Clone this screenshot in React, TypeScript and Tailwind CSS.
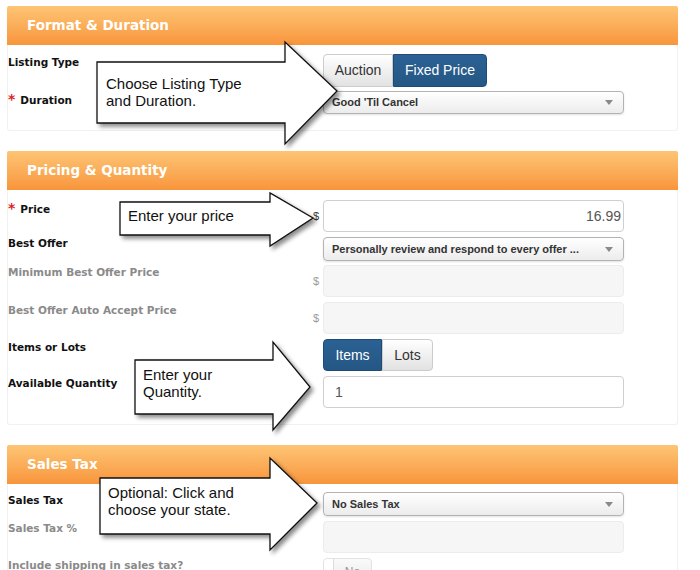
import type { ReactNode } from "react";

const LABEL = { fontFamily: '"DejaVu Sans", Verdana, sans-serif' };
const ARIAL = { fontFamily: '"Liberation Sans", Arial, sans-serif' };

function Section({ title, children, body }: { title: string; children: ReactNode; body: string }) {
  return (
    <div>
      <div
        className="flex h-[39px] items-center rounded-t-[2px] bg-gradient-to-b from-[#fdc574] to-[#f8953b] pl-[20px] text-[13.5px] font-bold text-white"
        style={LABEL}
      >
        {title}
      </div>
      <div className={`rounded-b-[3px] border border-t-0 border-[#f1f1f1] ${body}`}>{children}</div>
    </div>
  );
}

function Row({
  label,
  req,
  muted,
  pt = "pt-[1px]",
  addon,
  className = "",
  children,
}: {
  label: string;
  req?: boolean;
  muted?: boolean;
  pt?: string;
  addon?: boolean;
  className?: string;
  children: ReactNode;
}) {
  return (
    <div className={`flex ${className}`}>
      <div
        className={`w-[302px] text-[10.5px] font-bold leading-[13px] ${pt} ${muted ? "text-[#8a8a8a]" : "text-[#111]"}`}
        style={LABEL}
      >
        {req && <span className="mr-[5px] text-[14px] leading-[10px] text-[#d8261f]">*</span>}
        {label}
      </div>
      <div
        className={`flex w-[13px] items-center pl-[3px] text-[11px] ${muted ? "text-[#9a9a9a]" : "text-[#333]"}`}
        style={ARIAL}
      >
        {addon ? "$" : ""}
      </div>
      <div className="w-[301px]">{children}</div>
    </div>
  );
}

function Select({ value, h = "h-[24px]" }: { value: string; h?: string }) {
  return (
    <div
      className={`flex ${h} items-center justify-between rounded-[4px] border border-[#b3b3b3] bg-gradient-to-b from-white to-[#ececec] pl-[8px] pr-[10px] shadow-[0_1px_2px_rgba(0,0,0,0.12)]`}
    >
      <span className="text-[11px] font-bold text-[#333]" style={ARIAL}>
        {value}
      </span>
      <svg width="8" height="5" viewBox="0 0 8 5">
        <path d="M0 0h8L4 5z" fill="#8a8a8a" />
      </svg>
    </div>
  );
}

function Input({ value, right, disabled }: { value?: string; right?: boolean; disabled?: boolean }) {
  return (
    <div
      className={`flex h-[32px] items-center rounded-[4px] border px-[11px] text-[14px] text-[#555] ${
        disabled ? "border-[#ececec] bg-[#f6f6f6]" : "border-[#cfcfcf] bg-white"
      } ${right ? "justify-end pr-[2px]" : ""}`}
      style={ARIAL}
    >
      {value}
    </div>
  );
}

function Toggle({ items, active, h }: { items: [string, string][]; active: number; h: string }) {
  return (
    <div className="flex">
      {items.map(([t, w], i) => (
        <div
          key={t}
          className={`flex ${h} ${w} items-center justify-center border text-[14px] ${i === 0 ? "rounded-l-[4px]" : "rounded-r-[4px]"} ${
            i === active
              ? "border-[#1f4c77] bg-gradient-to-b from-[#2b6194] to-[#245784] text-white"
              : "border-[#cccccc] bg-gradient-to-b from-white to-[#e2e2e2] text-[#333]"
          }`}
          style={ARIAL}
        >
          {t}
        </div>
      ))}
    </div>
  );
}

type C = { l: number; t: number; r: number; b: number; ht: number; hb: number; tx: number; ty: number; x: number; y: number; lines: string[] };

const CALLOUTS: C[] = [
  { l: 97, t: 62, r: 285, b: 123, ht: 42, hb: 144, tx: 337, ty: 91, x: 106, y: 89, lines: ["Choose Listing Type", "and Duration."] },
  { l: 120, t: 202, r: 270, b: 235, ht: 193, hb: 246, tx: 313, ty: 218, x: 128, y: 221, lines: ["Enter your price"] },
  { l: 135, t: 360, r: 273, b: 414, ht: 342, hb: 430, tx: 310, ty: 387, x: 143, y: 380, lines: ["Enter your", "Quantity."] },
  { l: 100, t: 478, r: 270, b: 534, ht: 458, hb: 550, tx: 317, ty: 503, x: 108, y: 498, lines: ["Optional: Click and", "choose your state."] },
];

function Callouts() {
  return (
    <svg className="pointer-events-none absolute left-0 top-0" width="700" height="570" viewBox="0 0 700 570">
      <defs>
        <filter id="sh" x="-10%" y="-10%" width="130%" height="130%">
          <feDropShadow dx="3" dy="3" stdDeviation="2" floodColor="#000" floodOpacity="0.45" />
        </filter>
      </defs>
      {CALLOUTS.map((c, i) => (
        <g key={i}>
          <path
            d={`M${c.l} ${c.t}H${c.r}V${c.ht}L${c.tx} ${c.ty}L${c.r} ${c.hb}V${c.b}H${c.l}Z`}
            fill="#fff"
            stroke="#111"
            strokeWidth="1.3"
            filter="url(#sh)"
          />
          {c.lines.map((ln, j) => (
            <text key={j} x={c.x} y={c.y + j * 17} fontSize="15" fill="#111" style={ARIAL}>
              {ln}
            </text>
          ))}
        </g>
      ))}
    </svg>
  );
}

export default function App() {
  return (
    <div className="relative h-[570px] w-[700px] overflow-hidden bg-white">
      <div className="ml-[7px] flex w-[671px] flex-col gap-[20px] pt-[6px]">
        <Section title="Format & Duration" body="pt-[9px] pb-[16px]">
          <Row label="Listing Type" pt="pt-[2px]">
            <Toggle items={[["Auction", "w-[70px]"], ["Fixed Price", "w-[94px]"]]} active={1} h="h-[33px]" />
          </Row>
          <Row label="Duration" req pt="pt-[3px]" className="mt-[4px]">
            <Select value="Good 'Til Cancel" h="h-[23px]" />
          </Row>
        </Section>

        <Section title="Pricing & Quantity" body="pt-[10px] pb-[16px]">
          <Row label="Price" req addon pt="pt-[3px]">
            <Input value="16.99" right />
          </Row>
          <Row label="Best Offer" className="mt-[5px]" pt="pt-0">
            <Select value="Personally review and respond to every offer ..." />
          </Row>
          <Row label="Minimum Best Offer Price" muted addon className="mt-[4px]">
            <Input disabled />
          </Row>
          <Row label="Best Offer Auto Accept Price" muted addon className="mt-[5px]" pt="pt-[2px]">
            <Input disabled />
          </Row>
          <Row label="Items or Lots" className="mt-[5px]" pt="pt-[2px]">
            <Toggle items={[["Items", "w-[59px]"], ["Lots", "w-[51px]"]]} active={0} h="h-[32px]" />
          </Row>
          <Row label="Available Quantity" className="mt-[5px]">
            <Input value="1" />
          </Row>
        </Section>

        <Section title="Sales Tax" body="pt-[8px] pb-[16px]">
          <Row label="Sales Tax" pt="pt-[2px]">
            <Select value="No Sales Tax" />
          </Row>
          <Row label="Sales Tax %" muted className="mt-[5px]">
            <Input disabled />
          </Row>
          <Row label="Include shipping in sales tax?" muted className="mt-[5px]">
            <div className="flex h-[28px] w-[49px] items-center rounded-[4px] border border-[#e3e3e3] bg-gradient-to-b from-[#fafafa] to-[#e9e9e9]">
              <div className="h-full w-[10px] rounded-l-[4px] border-r border-[#dcdcdc] bg-white" />
              <span className="flex-1 text-center text-[12px] text-[#999]" style={ARIAL}>
                No
              </span>
            </div>
          </Row>
        </Section>
      </div>
      <Callouts />
    </div>
  );
}
